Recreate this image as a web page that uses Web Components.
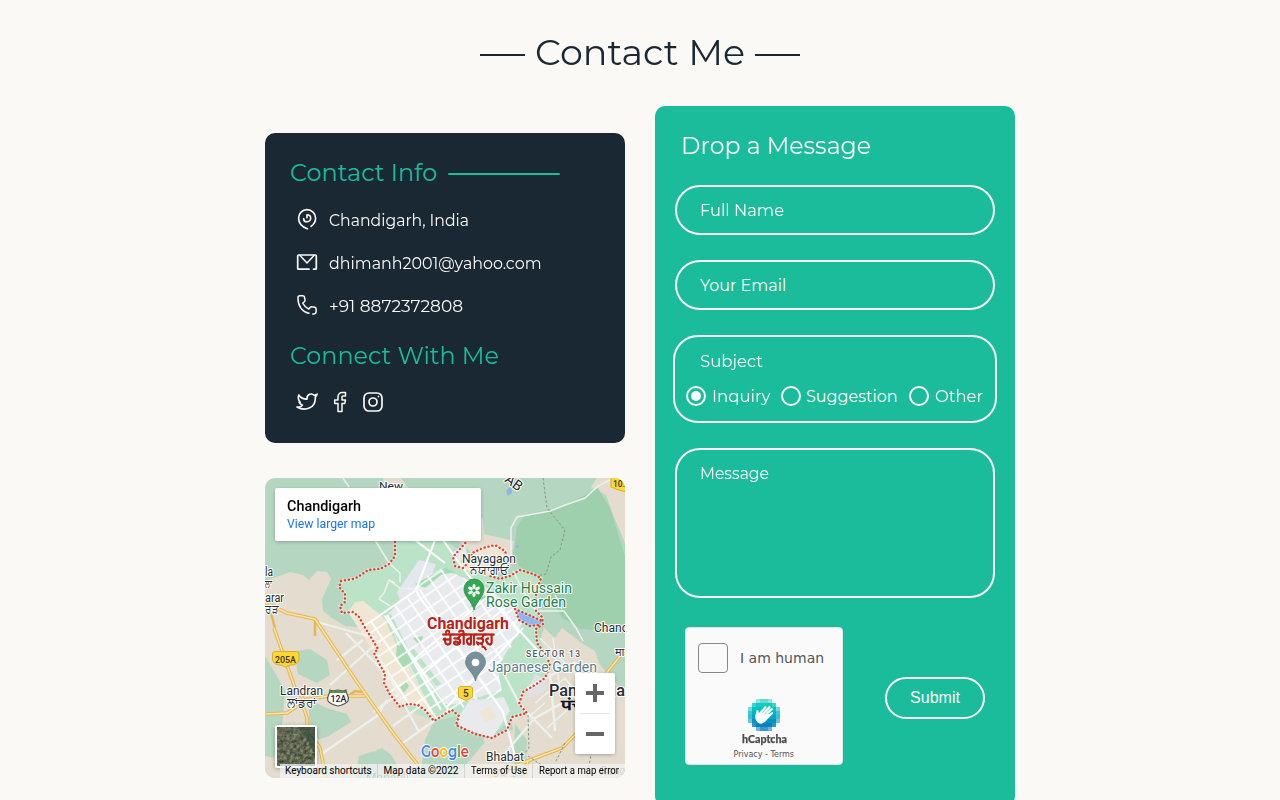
<!DOCTYPE html>
<html lang="en"><head><meta charset="utf-8"><title>Contact Me</title>
<style>html,body{margin:0;height:800px;overflow:hidden;background:#fbf9f5}</style></head><body>
<contact-page></contact-page>
<script>
const define=(name,html,ready)=>customElements.define(name,class extends HTMLElement{
  connectedCallback(){ if(this.shadowRoot)return; const r=this.attachShadow({mode:'open'}); r.innerHTML=typeof html==='function'?html(this):html; if(ready)ready(this,r); }
});

// One line of text whose glyphs are stretched to the width given in "w".
define('fit-text',`<style>:host{display:inline-block;white-space:nowrap;font-family:Montserrat,Inter,sans-serif;flex:none}span{display:inline-block;transform-origin:0 50%}</style><span><slot></slot></span>`,(el,r)=>{
  const s=r.querySelector('span'),w=+el.getAttribute('w');
  el.style.width=w+'px';
  const n=s.getBoundingClientRect().width; if(n&&Math.abs(n-w)>1)s.style.transform=`scaleX(${w/n})`;
});

const icons={
 pin:'<g transform="translate(.8 .8) scale(.93)"><path d="M12.500 22.500C6.500 20.500 3 16 3 11c0-5 4-9 9-9s9.300 4 9.300 9c0 3.800-2 7-5 9M12 7.500c2.300 0 4 1.700 4 3.800S14.200 15 12 15s-3.500-1.600-3.500-3.300M12 7.500v3.300" stroke-width="1.750"/></g>',
 mail:'<path d="M5 5.500L12 13L19 5.500"/><path d="M14 19.200H3.500a.8.8 0 0 1-.8-.8V5.800a.8.8 0 0 1 .8-.8h17a.8.8 0 0 1 .8.8v12.600a.8.8 0 0 1-.8.8H18.500" stroke-width="1.700"/>',
 phone:'<g transform="translate(.9 .7) scale(.93)"><path stroke-width="1.600" d="M14 21.100C6 18.800 2.300 12.500 2.200 4.500 2.200 3.200 3 2.300 4.300 2.300h3.200c.9 0 1.500.5 1.700 1.300l.6 3c.2.9-.1 1.500-.8 2.100L7.300 10c1.500 3.100 3.500 5.100 6.600 6.600l1.300-1.800c.6-.7 1.300-1 2.100-.8l3 .6c.9.2 1.400.8 1.400 1.700v3.200c0 1.300-.9 2.200-2.200 2.200h-1.400"/></g>',
 twitter:'<g transform="translate(1 1.300) scale(.92)"><path stroke-width="1.750" d="M23 3.010s-2.018 1.192-3.140 1.530a4.480 4.480 0 0 0-7.860 3v1a10.660 10.660 0 0 1-9-4.530s-1.500 4.500 1.500 8c-.8 0-1 0-1 0 1 2 2.500 2.500 3.500 3-1 1.500-3.500 2.500-6 2 9 5 20 1.500 20-9.500 0-.278-.028-.556-.080-.830C21.940 5.674 23 3.010 23 3.010z"/></g>',
 facebook:'<path d="M17.500 2.500h-3.500a4 4 0 0 0-4 4v3.500H6.700v3.500H10v8h4v-8h2.700l.8-3.500H14V7a1 1 0 0 1 1-1h2.500z"/>',
 instagram:'<path d="M12 16a4 4 0 1 0 0-8 4 4 0 0 0 0 8z" stroke-width="1.700"/><path stroke-width="1.700" d="M3 16V8a5 5 0 0 1 5-5h8a5 5 0 0 1 5 5v8a5 5 0 0 1-5 5H8a5 5 0 0 1-5-5zM17.500 6.510l.010-.011"/>'
};
define('line-icon',el=>`<style>:host{display:block;width:24px;height:24px;flex:none}svg{display:block}</style><svg width="24" height="24" viewBox="0 0 24 24" fill="none" stroke="#fbf9f5" stroke-width="1.500" stroke-linecap="round" stroke-linejoin="round">${icons[el.getAttribute('name')]}</svg>`);

define('section-title',`<style>:host{display:flex;justify-content:center;align-items:center;gap:10px;height:106px;box-sizing:border-box;color:#1a2834;font-size:36px;line-height:44px}i{width:45px;height:2px;background:#1a2834;margin-top:3px}fit-text{margin-bottom:2px}</style><i></i><fit-text w="210">Contact Me</fit-text><i></i>`);

define('contact-item',el=>`<style>:host{display:flex;align-items:flex-start;height:43px;padding-left:5px;gap:10px;color:#fbf9f5;font-size:16px;line-height:20px}fit-text{margin-top:4px}</style><line-icon name="${el.getAttribute('icon')}"></line-icon><fit-text w="${el.getAttribute('w')}">${el.textContent}</fit-text>`);

define('info-card',`<style>:host{display:block;box-sizing:border-box;height:310px;padding:25px;border-radius:10px;background:#1a2834;color:#1bbc9b;font-size:24px;line-height:30px}
.h{display:flex;align-items:center;height:30px;gap:11px}.h i{width:112px;height:2px;border-radius:1px;background:#1bbc9b;margin-top:2px}
.list{margin-top:19px;height:134px}.social{display:flex;gap:9px;padding-left:5px;margin-top:19px}</style>
<div class="h"><fit-text w="147">Contact Info</fit-text><i></i></div>
<div class="list"><contact-item icon="pin" w="140">Chandigarh, India</contact-item><contact-item icon="mail" w="212.500">dhimanh2001@yahoo.com</contact-item><contact-item icon="phone" w="134">+91 8872372808</contact-item></div>
<div class="h"><fit-text w="209">Connect With Me</fit-text></div>
<div class="social"><line-icon name="twitter"></line-icon><line-icon name="facebook"></line-icon><line-icon name="instagram"></line-icon></div>`);

const border="M203 62L195 71 188 79 190 88 198 90 205 83 207 75 218 70 230 67 240 73 242 79M130 60V78L124 86 115 91 103 92 93 99 88 101 76 103 74 109 80 116 80 124 75 128 77 135 88 134 94 139 99 148 104 156 113 171 109 175 115 187 120 196 119 205 124 215 135 229 143 226 153 227 160 232 169 243 180 236 187 232 194 238 191 247 210 256 227 260 242 252 247 239 262 235 254 226 258 214 270 207 280 200 285 188 282 178 272 165 271 151 278 146 277 139 271 133 271 115 276 100 268 96 255 92 245 98 235 101 225 98M250 131L254 142 265 148 274 147M250 131L266 138 277 143";
const T=(x,y,w,size,text,extra='')=>`<text x="${x}" y="${y}" textLength="${w}" lengthAdjust="spacingAndGlyphs" font-size="${size}" ${extra}>${text}</text>`;
define('map-embed',`<style>:host{display:grid;height:300px;border-radius:10px;overflow:hidden;position:relative;font-family:Roboto,sans-serif}
:host>svg{grid-area:1/1}
.place{grid-area:1/1;width:206px;height:53px;margin:10px;box-sizing:border-box;padding:10px 12px;background:#fff;border-radius:2px;box-shadow:0 1px 4px -1px rgba(0,0,0,.4);z-index:1;line-height:16px;font-size:14px;font-weight:500;color:#000}
.place fit-text{font-family:Roboto;display:block}
.place a{display:block;font-size:12px;font-weight:400;color:#1a73e8;line-height:16px;margin-top:2px}
.zoom{position:absolute;right:10px;bottom:24px;width:40px;height:81px;background:#fff;border-radius:2px;box-shadow:0 1px 4px -1px rgba(0,0,0,.4)}
.sat{position:absolute;left:10px;top:247px;width:38px;height:39px;border:2px solid #fff;border-radius:2px;box-shadow:0 1px 4px rgba(0,0,0,.3);overflow:hidden}
.terms{position:absolute;right:0;bottom:0;height:14px;display:flex;background:rgba(245,245,245,.72);font-size:10px;line-height:14px;color:#000}
.terms span{padding:0 5px;border-left:1px solid rgba(120,140,130,.25);white-space:nowrap;box-sizing:border-box;text-align:center}.terms span:first-child{border:0}.terms fit-text{font-family:Roboto}</style>
<svg width="360" height="300" viewBox="0 0 360 300">
<defs>
<clipPath id="city"><path d="M99 148L122 136 135 122 150 112 162 98 175 91 190 96 222 110 250 130 258 148 246 170 232 189 237 215 238 220 205 224 196 232 187 232 169 243 153 227 135 229 124 215 119 200 109 175 112 170Z"/></clipPath>
<pattern id="blocks" width="14.500" height="12" patternUnits="userSpaceOnUse" patternTransform="translate(102 150) rotate(-34)"><path d="M0 6H14.500M7 0V12" stroke="#fff" stroke-width="1.700"/></pattern></defs>
<rect width="360" height="300" fill="#b5d7c1"/>
<path d="M181 48L190 24 218 41 219 56 249 63 246 80 208 76 190 60Z" fill="#e3dccf"/>
<path d="M118 0L121 14H146L136 0ZM332 0L326 9 341 17 349 39 360 65V0ZM0 103L25 94 38 97 44 102 52 93 62 94 66 101 57 121 58 133 67 140 80 148 102 150 168 243 172 300H0V278L28 284 70 300 94 294 110 270 124 282 132 300H140L110 250 80 245 45 236 0 178Z" fill="#e3dccf"/>
<path d="M0 155L70 145 110 175 119 205 135 229 169 243 154 270 132 281 117 270 94 278 90 300H16L11 281 0 268Z" fill="#e3dccf"/>
<path d="M0 178L20 212 18 240 12 278 0 278ZM29 173L45 171 62 182 65 197 52 205 33 196ZM44 222L62 230 82 236 86 244 62 259 51 262 44 250Z" fill="#b5d7c1"/>
<path d="M98 278L118 270 132 300H90Z" fill="#b5d7c1"/>
<path d="M279 150L290 160 297 150 318 166 360 190V300H188L220 260 248 252 245 232 258 214Z" fill="#e3dccf"/>
<path d="M169 243L160 262 155 300H190L220 264 210 256Z" fill="#b5d7c1"/>
<path d="M250 246L262 262 260 300H248ZM322 149L345 162 360 155V220L334 185Z" fill="#b5d7c1"/>
<path d="M252 48L260 37 300 27 333 10 345 30 360 78V155L316 151 297 140 286 120 248 81Z" fill="#9fd0ad"/>
<path d="M130 63L130 78 115 91 93 99 76 103 80 116 75 128 77 135 88 134 94 139 104 156 119 199 135 229 169 243 194 238 191 247 227 260 247 239 262 235 254 226 258 214 282 195 285 188 282 178 271 151 276 100 255 92 235 101 205 83 182 62Z" fill="#bbe3c7"/>
<path d="M83 134L90 124 98 123 107 130 119 140 133 170 152 204 165 228 169 243 153 227 135 229 119 205 109 175Z" fill="#efe6d4"/>
<path d="M190 88L205 83 207 75 218 70 230 67 242 79 241 89 225 98 204 93Z" fill="#efe6d4"/>
<path d="M154 82L171 86 164 105 151 112 137 128 132 114ZM188 74L200 66 203 81 190 84Z" fill="#e4e7eb"/>
<path d="M122 137L135 124 152 112 165 97 176 91 192 97 222 110 250 130 257 146 244 170 232 189 237 212 205 222 190 226 166 226 150 200 134 170Z" fill="#e8eaed"/>
<path d="M121 138L126 136 172 228H165ZM162 200L166 203 182 229 176 230ZM148 170L176 206 171 208 145 174Z" fill="#bbe3c7"/>
<path d="M132 168L140 166 144 178 148 186 136 190 131 178ZM135 209L141 204 144 208 139 215ZM203 132L212 120 222 117 221 122 208 134ZM148 160L158 158 155 168ZM150 106L180 90 190 94 176 97 160 110Z" fill="#a8dab5"/>
<path d="M245 170L258 160 268 175 262 205 250 212 240 198Z" fill="#bbe3c7"/>
<g clip-path="url(#city)"><rect width="360" height="300" fill="url(#blocks)"/></g>
<path d="M194 238L205 222 224 221 239 219 245 233 227 260 194 248Z" fill="#e8eaed"/><path d="M214 234L225 228 232 240 220 244Z" fill="#efe6d4"/>
<path d="M262 214L270 196 281 202 280 213 264 220Z" fill="#dfe1e6"/>
<g fill="none" stroke="#edf1ed"><path stroke-width="1.500" d="M78 0L84 9M110 62L124 85 135 95V104M130 105L124 102 119 115 114 121 125 128M125 103L135 110 152 111 166 110M248 93L262 120 271 133 299 133 311 150 318 163M246 82V50L252 39 285 33 303 26 320 20 333 8 345 2M297 131L290 117"/><path stroke-width="2.300" d="M81 155L125 200 154 254M52 144L88 154 112 160M65 207L112 165M55 277L112 238 122 222M108 234L135 215M128 248L158 226M135 267L170 242M72 182L98 162M240 198L255 227 287 260M285 195L290 253M262 210L311 184M240 275L270 240 310 218"/><path stroke-width="1.500" d="M275 160L330 215M270 225L300 200 330 240M282 250L310 225M288 160L296 220M262 240L280 225"/></g>
<path d="M170 62L151 112 155 120 218 205 238 234 250 278M178 62L190 79 204 98 275 175M98 149L150 113M150 62L180 85M122 137L176 232M147 183L225 117M182 229L258 150M155 198L240 130" fill="none" stroke="#fff" stroke-width="2.100"/>
<path d="M0 124L22 135 50 141 62 159 92 204 128 255 153 287M1 236L22 235 37 225 42 240 42 251 55 270 61 300M9 150L30 210 39 222 63 218H100M220 300L265 282 297 270 317 250M263 282L260 300M336 202L360 172" stroke="#e5b656" stroke-width="3.600" fill="none"/>
<path d="M6 135L10 150M50 142V158M82 219L90 213 97 214" stroke="#e5b656" stroke-width="2.500" fill="none"/>
<path d="M0 124L22 135 50 141 62 159 92 204 128 255 153 287M1 236L22 235 37 225 42 240 42 251 55 270 61 300M9 150L30 210 39 222 63 218H100M220 300L265 282 297 270 317 250M263 282L260 300M336 202L360 172" stroke="#fae5a7" stroke-width="1.400" fill="none"/>
<path d="M278 0L282 30 300 52 295 72 286 79 281 96 272 98M263 237L264 270 260 275M263 278L281 290 292 298M300 265L290 285M328 265L322 300" stroke="#87908c" fill="none" stroke-dasharray="2.500 2"/>
<path d="M250 131L266 137 278 143 275 147 263 148 254 142ZM241 13L246 8 247 15 243 18ZM250 69L253 66 254 70Z" fill="#91b4ea"/>
<path d="${border}" fill="none" stroke="#fff" stroke-opacity=".35" stroke-width="3.500"/>
<path d="${border}" fill="none" stroke="#e2402f" stroke-width="2.400" stroke-linecap="round" stroke-dasharray=".1 3.900"/>
<g fill="#252b30" stroke="#fff" stroke-width="2" stroke-linejoin="round" paint-order="stroke" font-family="Roboto,'Noto Sans',sans-serif">
${T(114,12,24,11.500,'New')}${T(197,84.500,54,12,'Nayagaon')}${T(205,96,39,11.500,'ਨਯਾਗਾਓਂ')}${T(0,98,8,12,'la')}${T(0,109,7,10,'ਲਾ')}${T(0,123.500,19,12,'arar')}${T(0,135,13,11,'ਰੜ')}${T(15,217,43,12,'Landran')}${T(22,229,29,11.500,'ਲਾਂਡਰਾਂ')}${T(221,283,38,12,'Bhabat')}${T(329,154,34,12,'Chanc')}<text x="261" y="179" textLength="54" font-size="8.500" fill="#555" font-weight="500">SECTOR 13</text>
<g font-weight="500">${T(284,218,76,16,'Panchkula')}</g>${T(296,232,23,14,'पंच','fill="#111" stroke="#111" stroke-width=".6"')}
<text transform="translate(239 3) rotate(37)" font-size="14">AB</text>
<text x="350" y="178" font-size="11">मा</text>
<g fill="#238048" font-size="14">${T(221,115,86,14,'Zakir Hussain')}${T(221,129,80,14,'Rose Garden')}</g>
${T(223,194,109,14,'Japanese Garden','fill="#5e7d8c"')}
<g fill="#bd2018" font-weight="700">${T(162,151,82,16,'Chandigarh')}</g></g>
<g style="filter:drop-shadow(0 0 1px #fff)">${T(178,166,51,15.5,'ਚੰਡੀਗੜ੍ਹ','fill="#bd2018" stroke="#bd2018" stroke-width=".6" font-weight="700"')}</g>
<g opacity=".45">${T(101,304,43,12,'Manauli')}${T(228,298,24,11,'ਭਬਾਤ')}${T(336,297,24,12,'Ramg')}</g>
<path d="M209 132C207 123 199 119 199 111A10 10 0 1 1 219 111C219 119 211 123 209 132Z" fill="#34a853" stroke="#238048" stroke-width=".7"/>
<g fill="#fff"><ellipse cx="209" cy="108.500" rx="1.600" ry="2.500"/><ellipse cx="209" cy="116.500" rx="1.600" ry="2.500"/><ellipse cx="205.500" cy="110.500" rx="2.500" ry="1.600" transform="rotate(25 205.500 110.500)"/><ellipse cx="212.500" cy="110.500" rx="2.500" ry="1.600" transform="rotate(-25 212.500 110.500)"/><ellipse cx="205.500" cy="114.500" rx="2.500" ry="1.600" transform="rotate(-25 205.500 114.500)"/><ellipse cx="212.500" cy="114.500" rx="2.500" ry="1.600" transform="rotate(25 212.500 114.500)"/></g>
<path d="M210.500 203C208.500 194 200.500 191 200.500 184A10 10 0 1 1 220.500 184C220.500 191 212.500 194 210.500 203Z" fill="#78909c" stroke="#5e7885" stroke-width=".7"/><circle cx="210.500" cy="184.500" r="3.800" fill="#fff"/>
<g stroke="#dcae23" fill="#fdd835"><path d="M10 173.500H31Q34 173.500 34 176.500V182Q32 187 26 187L20.500 189 15 187Q9 187 7.500 182V176.500Q7.500 173.500 10 173.500Z"/><path d="M195 208.500H206L207.500 210V219L201 222.500 193.500 219V210Z"/><path d="M346 -3H365V15L354 12 346 9Z"/></g>
<g font-family="Roboto" fill="#38332a">${T(10,184.500,21,9.500,'205A','font-weight="500"')}<text x="198" y="219" font-size="10" font-weight="500">5</text><text x="348" y="9" font-size="9.500" font-weight="500" textLength="12" lengthAdjust="spacingAndGlyphs">10.</text></g>
<path d="M65 212L68 213 73 212 78 213 81 212C81 217 85 218 83 223Q81 226 73 228 65 226 63 223C61 218 65 217 65 212Z" fill="#fff" stroke="#555" stroke-width="1.200"/><path d="M65 213H81V215H65Z" fill="#58933f"/>${T(65.500,223.500,16,9,'12A','font-family="Roboto" font-weight="500" fill="#222"')}
<text x="156" y="279" textLength="48" lengthAdjust="spacingAndGlyphs" font-family="Montserrat" font-size="16.500" font-weight="600" stroke="#fff" stroke-width="1.800" paint-order="stroke"><tspan fill="#4285f4">G</tspan><tspan fill="#ea4335">o</tspan><tspan fill="#fbbc05">o</tspan><tspan fill="#4285f4">g</tspan><tspan fill="#34a853">l</tspan><tspan fill="#ea4335">e</tspan></text>
</svg>
<div class="place"><fit-text w="74">Chandigarh</fit-text><a><fit-text w="88">View larger map</fit-text></a></div>
<svg class="sat" viewBox="0 0 38 39"><defs><filter id="sat" x="0" y="0" width="1" height="1" color-interpolation-filters="sRGB"><feTurbulence type="fractalNoise" baseFrequency=".3" numOctaves="4" seed="9"/><feColorMatrix values=".4 .3 0 0 .03 .35 .3 0 0 .08 .3 .3 0 0 .02 0 0 0 0 1"/></filter></defs><rect width="38" height="39" filter="url(#sat)"/><path d="M20 0H38V28L30 12Z" fill="#2f4a3a" opacity=".55"/></svg>
<svg class="zoom" viewBox="0 0 40 81"><path d="M11 20H29M20 11V29M11 61H29" stroke="#666" stroke-width="4"/><path d="M5 40.500H35" stroke="#e6e6e6"/></svg>
<div class="terms"><span style="width:97px;padding:0 5px 0 4px"><fit-text w="86">Keyboard shortcuts</fit-text></span><span style="width:87px"><fit-text w="75">Map data ©2022</fit-text></span><span style="width:68px"><fit-text w="56">Terms of Use</fit-text></span><span style="width:93px"><fit-text w="80">Report a map error</fit-text></span></div>`);

define('text-field',`<style>:host{display:block;box-sizing:border-box;width:320px;height:var(--h,50px);border:2px solid #fbf9f5;border-radius:25px;padding:14px 23px;color:#fbf9f5;font-size:16px;line-height:20px}</style><slot></slot>`);
define('radio-option',el=>`<style>:host{display:flex;align-items:center;height:20px;gap:6px;color:#fbf9f5}i{box-sizing:border-box;width:20px;height:20px;border:2px solid #fbf9f5;border-radius:50%;display:grid;place-items:center}i::after{content:"";width:10px;height:10px;border-radius:50%;background:${el.hasAttribute('checked')?'#fbf9f5':'none'}}</style><i></i><slot></slot>`);

const shades=['#29d6c4','#12ccc0','#00c4c0','#00b6c0','#00a5c4','#0095c4','#0083c0','#0074bf'];
let pixels='';
for(let y=0;y<8;y++)for(let x=0;x<8;x++){const a=Math.min(x,7-x),b=Math.min(y,7-y);if(a+b<2)continue;pixels+=`<rect x="${x*4}" y="${y*4}" width="4" height="4" fill="${shades[y]}" opacity="${a+b===2?(a===1?.82:.55):(a===0||b===0?.75:1)}"/>`;}
define('captcha-box',`<style>:host{display:flex;flex-direction:column;align-items:center;box-sizing:border-box;width:158px;height:138px;border:1px solid #e0e0e0;border-radius:4px;background:#fafafa;color:#555;font-family:"DejaVu Sans",sans-serif}
.check{display:flex;align-items:center;gap:12px;align-self:flex-start;margin:15px 0 0 12px;height:30px;font-size:14px}i{box-sizing:border-box;width:30px;height:30px;border:1px solid #888;border-radius:4px;background:#fafafa}
.logo{margin-top:26px;display:block}b{font:900 11.500px/14px Lato,sans-serif;margin-top:1px;color:#4d4d4d;-webkit-text-stroke:.25px #4d4d4d}.legal{font-size:8px;line-height:10px;margin-top:4px}</style>
<div class="check"><i></i><fit-text w="84.500" style="font-family:'DejaVu Sans'">I am human</fit-text></div>
<svg class="logo" width="32" height="32">${pixels}<path d="M8.500 22C6.500 18 7 17 8 14.500L8.500 11.500C9.500 10.200 10.800 11.200 10.700 13L10.500 14.500 16.500 7.600C17.700 6.500 19 7.700 18.200 8.900L15 13 20.500 7.600C21.900 6.600 23.200 8 22.100 9.200L17 14.400 23 9.200C24.500 8.300 25.500 9.800 24.400 10.900L18.800 16.200 23.600 13.200C25.100 12.600 25.700 14 24.600 14.900L18.500 21.200C15.500 25 11 26.500 8.500 22Z" fill="#fff"/><path d="M14.200 14.200L16 12.300M16.500 15.200L18.500 13.300" stroke="#00a5c4" stroke-width=".6"/></svg>
<b><fit-text w="45" style="font-family:Lato">hCaptcha</fit-text></b><div class="legal"><fit-text w="61" style="font-family:'DejaVu Sans'">Privacy - Terms</fit-text></div>`);

define('message-form',`<style>:host{display:block;box-sizing:border-box;height:700px;border-radius:10px;background:#1bbc9b;color:#fbf9f5;padding:25px 20px 0;font-size:16px;line-height:20px}
.title{font-size:24px;line-height:30px;padding-left:6px;height:54px}.fields{display:flex;flex-direction:column;gap:25px}
.subject{box-sizing:border-box;margin:0 -2px;height:88px;border:2px solid #fbf9f5;border-radius:25px;padding:15px 11px}.subject>fit-text{margin-left:14px;display:block}.opts{display:flex;gap:11px;margin-top:14px}.opts fit-text{margin-top:1px}
.foot{display:flex;justify-content:space-between;align-items:flex-start;padding:29px 10px 0}.submit{box-sizing:border-box;width:100px;height:42px;margin-top:50px;border:2px solid #fbf9f5;border-radius:21px;text-align:center;line-height:37px;font-size:16px}</style>
<div class="title"><fit-text w="190">Drop a Message</fit-text></div>
<div class="fields"><text-field><fit-text w="84">Full Name</fit-text></text-field><text-field><fit-text w="86">Your Email</fit-text></text-field>
<div class="subject"><fit-text w="63">Subject</fit-text><div class="opts"><radio-option checked style="gap:5.500px"><fit-text w="58.500">Inquiry</fit-text></radio-option><radio-option style="gap:5px"><fit-text w="92">Suggestion</fit-text></radio-option><radio-option><fit-text w="48">Other</fit-text></radio-option></div></div>
<text-field style="--h:150px"><fit-text w="69">Message</fit-text></text-field></div>
<div class="foot"><captcha-box></captcha-box><div class="submit"><fit-text w="50" style="font-family:'Liberation Sans'">Submit</fit-text></div></div>`);

define('contact-page',`<style>:host{display:block;width:1280px;height:800px;overflow:hidden;background:#fbf9f5}main{display:grid;grid-template-columns:360px 360px;gap:30px;justify-content:center}.left{display:flex;flex-direction:column;gap:35px;padding-top:27px}</style><section-title></section-title><main><div class="left"><info-card></info-card><map-embed></map-embed></div><message-form></message-form></main>`);
</script></body></html>
